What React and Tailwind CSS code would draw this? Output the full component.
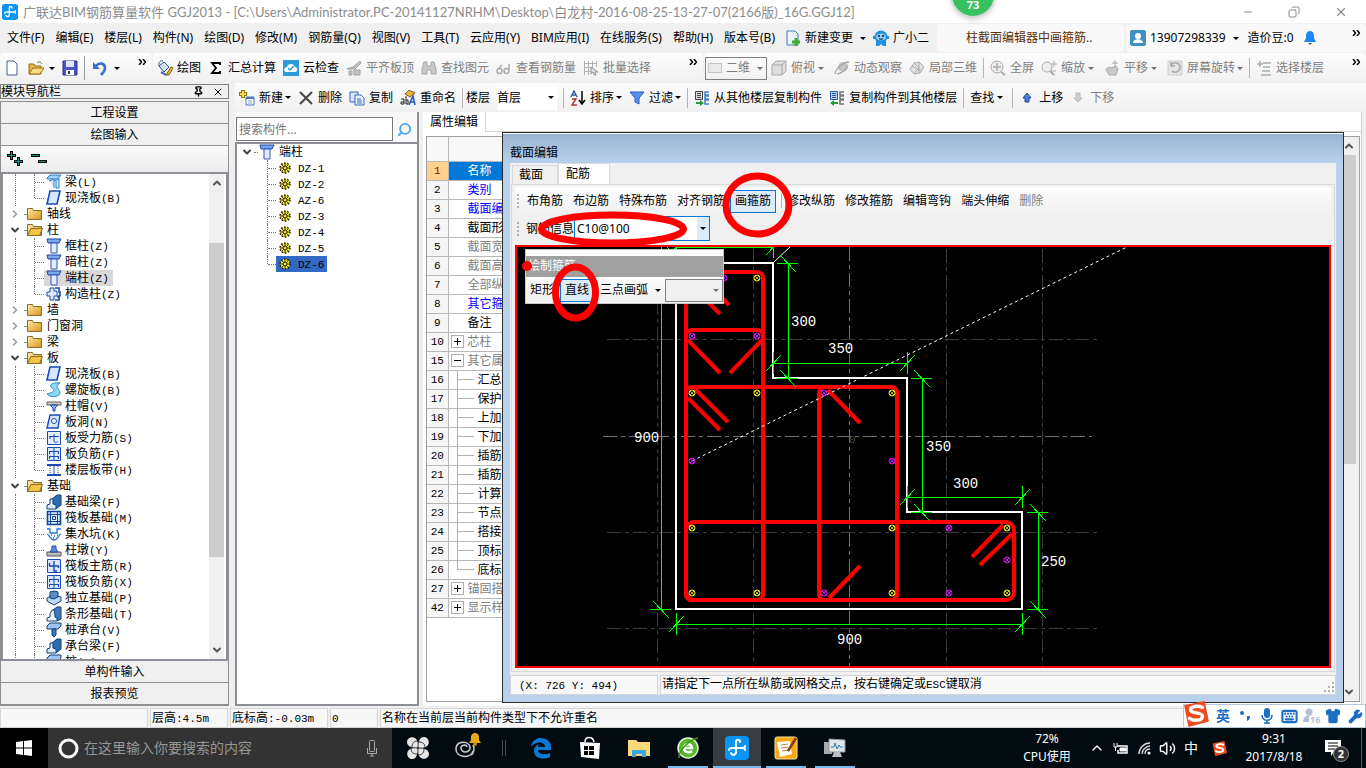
import React, { useState } from 'react';
import { Keyboard, Shirt, Wrench, Volume2, ChevronUp, ChevronDown, ChevronRight, Search, Minus, X, Copy, Pin } from 'lucide-react';

const menus = ['文件(F)', '编辑(E)', '楼层(L)', '构件(N)', '绘图(D)', '修改(M)', '钢筋量(Q)', '视图(V)', '工具(T)', '云应用(Y)', 'BIM应用(I)', '在线服务(S)', '帮助(H)', '版本号(B)'];

const navTree = [
    { icon: 'beam', text: '梁', key: '(L)' },
    { icon: 'slab', text: '现浇板', key: '(B)', last: true },
    { folder: 'closed', text: '轴线' },
    { folder: 'open', text: '柱' },
    { icon: 'column', text: '框柱', key: '(Z)' },
    { icon: 'column', text: '暗柱', key: '(Z)' },
    { icon: 'column', text: '端柱', key: '(Z)', selected: true },
    { icon: 'struct', text: '构造柱', key: '(Z)', last: true },
    { folder: 'closed', text: '墙' },
    { folder: 'closed', text: '门窗洞' },
    { folder: 'closed', text: '梁' },
    { folder: 'open', text: '板' },
    { icon: 'slab', text: '现浇板', key: '(B)' },
    { icon: 'spiral', text: '螺旋板', key: '(B)' },
    { icon: 'cap', text: '柱帽', key: '(V)' },
    { icon: 'hole', text: '板洞', key: '(N)' },
    { icon: 'gridA', text: '板受力筋', key: '(S)' },
    { icon: 'gridB', text: '板负筋', key: '(F)' },
    { icon: 'band', text: '楼层板带', key: '(H)', last: true },
    { folder: 'open', text: '基础' },
    { icon: 'fbeam', text: '基础梁', key: '(F)' },
    { icon: 'raft', text: '筏板基础', key: '(M)' },
    { icon: 'pit', text: '集水坑', key: '(K)' },
    { icon: 'pier', text: '柱墩', key: '(Y)' },
    { icon: 'gridC', text: '筏板主筋', key: '(R)' },
    { icon: 'gridB', text: '筏板负筋', key: '(X)' },
    { icon: 'pad', text: '独立基础', key: '(P)' },
    { icon: 'strip', text: '条形基础', key: '(T)' },
    { icon: 'pile', text: '桩承台', key: '(V)' },
    { icon: 'fbeam', text: '承台梁', key: '(F)' },
    { icon: 'pile', text: '桩', key: '(U)' },
];

const members = ['DZ-1', 'DZ-2', 'AZ-6', 'DZ-3', 'DZ-4', 'DZ-5', 'DZ-6'];

const propRows = [
    { no: 1, name: '名称', active: true },
    { no: 2, name: '类别', color: 'text-[#0000ff]' },
    { no: 3, name: '截面编辑', color: 'text-[#0000ff]' },
    { no: 4, name: '截面形状' },
    { no: 5, name: '截面宽', color: 'text-[#808080]' },
    { no: 6, name: '截面高', color: 'text-[#808080]' },
    { no: 7, name: '全部纵筋', color: 'text-[#808080]' },
    { no: 8, name: '其它箍筋', color: 'text-[#0000ff]' },
    { no: 9, name: '备注' },
    { no: 10, name: '芯柱', color: 'text-[#808080]', box: '+' },
    { no: 15, name: '其它属性', color: 'text-[#808080]', box: '-' },
    { no: 16, name: '汇总信息', child: true },
    { no: 17, name: '保护层厚', child: true },
    { no: 18, name: '上加密范', child: true },
    { no: 19, name: '下加密范', child: true },
    { no: 20, name: '插筋构造', child: true },
    { no: 21, name: '插筋信息', child: true },
    { no: 22, name: '计算设置', child: true },
    { no: 23, name: '节点设置', child: true },
    { no: 24, name: '搭接设置', child: true },
    { no: 25, name: '顶标高', child: true },
    { no: 26, name: '底标高', child: true, last: true },
    { no: 27, name: '锚固搭接', color: 'text-[#808080]', box: '+' },
    { no: 42, name: '显示样式', color: 'text-[#808080]', box: '+' },
];

// ---------- icons ----------

const treeShapes = {
    column: <><path d="M1 1h14l-2 4H2z" fill="#7ea6ec" stroke="#1d4aa8" /><path d="M5 5h6v10H5z" fill="#e4edff" stroke="#2a55c0" /></>,
    beam: <><path d="M1 4l3-3h11l-3 4H1z" fill="#9cd2f5" stroke="#2a7fc4" /><path d="M3 7l5-2v9M8 7l5-2v9h-3V7" fill="#cfeafd" stroke="#2a7fc4" /></>,
    slab: <path d="M4 1h10l-3 13H1z" fill="#d7e6ff" stroke="#1b49b8" strokeWidth="1.6" />,
    struct: <><path d="M4 2h4v3h3v5H8v4H4v-4H1V6h3z" fill="#dce8ff" stroke="#1b49a0" /><path d="M9 2h4v3M12 6h2v4h-2M11 11h2v3H9" fill="none" stroke="#1b49a0" strokeWidth="1.6" /></>,
    spiral: <path d="M14 1C7 0 2 3 6 6c3 2 3 4-5 6 3 4 13 3 13-1S7 5 14 1z" fill="#8fd6f8" stroke="#2688c8" />,
    cap: <><path d="M1 4h14v3H1z" fill="#c8c8c8" stroke="#666" /><path d="M4 7h8l-3 3v3H7v-3z" fill="#8fb2f0" stroke="#1b49a0" /></>,
    hole: <><path d="M4 1h10l-2 13H1z" fill="#d7e6ff" stroke="#1b49b8" strokeWidth="1.4" /><circle cx="8" cy="7" r="2.5" fill="#fff" stroke="#1b49b8" /></>,
    gridA: <><path d="M1.500 1.500h13v13h-13z" fill="#e6efff" stroke="#1b49b8" /><path d="M3 6.500h10M8 4v7c0 2 3 2 4 0M4 6v3" fill="none" stroke="#1b49b8" /></>,
    gridB: <><path d="M1.500 1.500h13v13h-13z" fill="#dbe7ff" stroke="#1b49b8" /><path d="M8 1v13M3 5.500h10M3 10.500h10M3.500 5v3M12.500 5v3M3.500 10v3M12.500 10v3" fill="none" stroke="#1b49b8" /></>,
    gridC: <><path d="M1.500 1.500h13v13h-13z" fill="#dbe7ff" stroke="#1b49b8" /><path d="M3 8h10M8 3v10h3M3.500 5v3M12.500 8v2" fill="none" stroke="#1b49b8" strokeWidth="1.400" /></>,
    band: <><path d="M1 3h14M1 13h14" stroke="#1b49b8" strokeWidth="2" /><path d="M4 4v8M12 4v8" stroke="#444" strokeDasharray="1 1" /><path d="M8 3v10" stroke="#1b49b8" /></>,
    fbeam: <><path d="M6 5l5-4h4v10l-5 4z" fill="#2f6cb0" stroke="#123f7c" /><path d="M1 15v-4l3-1V5h3v5l3 1v4z" fill="#dcecff" stroke="#123f7c" /></>,
    raft: <><path d="M1.500 1.500h13v13h-13z" fill="#dbe9ff" stroke="#0f4393" strokeWidth="1.600" /><path d="M4.500 1v13M11.500 1v13M1 4.500h13M1 11.500h13M6.500 6.500h3v3h-3z" fill="none" stroke="#0f4393" /></>,
    pit: <path d="M1 3h3v4h7V3h4M1 8c3 1 3 6 7 6s4-5 7-6M5 9h1M8 10h1M11 9h1M7 12h1" fill="none" stroke="#2a6fd0" strokeWidth="1.3" />,
    pier: <><path d="M1 10h14v4H1z" fill="#bbb" stroke="#555" /><path d="M4 10l2-3V4h4v3l2 3z" fill="#5c8fe8" stroke="#1b49a0" /></>,
    pad: <><path d="M1 8l6-3 8 2v4l-7 4-7-4z" fill="#bcd8f8" stroke="#123f7c" /><path d="M4 8V2l4-1 4 1v5L8 9z" fill="#5a8cc8" stroke="#123f7c" /></>,
    strip: <><path d="M7 4l4-3h4v12l-4 2z" fill="#3d78b8" stroke="#123f7c" /><path d="M1 15v-3l3-1V8l2-4h2l1 4v3l2 1v3z" fill="#eaf3ff" stroke="#123f7c" /></>,
    pile: <><path d="M1 4l3-3h11v3l-3 3H1z" fill="#9cc3f2" stroke="#123f7c" /><path d="M6 7h4v6l-2 2-2-2z" fill="#3d78b8" stroke="#123f7c" /></>,
};

function TreeIcon({ name }) {
    return <svg className="h-4 w-4 shrink-0" viewBox="0 0 16 16">{treeShapes[name]}</svg>;
}

function Folder({ open }) {
    return (
        <svg className="h-4 w-4 shrink-0" viewBox="0 0 16 16">
            <defs>
                <linearGradient id="fold" x1="0" y1="0" x2="1" y2="1">
                    <stop offset="0" stopColor="#fff0b0" />
                    <stop offset="1" stopColor="#d89010" />
                </linearGradient>
            </defs>
            <path d="M.5 13.500v-11h5l1 2h8v9z" fill="url(#fold)" stroke="#8a6a2a" />
            {open && <path d="M.5 13.500l3.500-7h11.500l-3 7z" fill="#f5c440" stroke="#8a6a2a" />}
        </svg>
    );
}

function Gear() {
    return (
        <svg className="h-3 w-3 shrink-0" viewBox="0 0 12 12">
            <circle cx="6" cy="6" r="5" fill="#f2ea2a" stroke="#111" strokeWidth="1.400" strokeDasharray="1.600 1.540" />
            <path d="M6 1v3M6 8v3M1 6h3M8 6h3M2.500 2.500l2 2M7.500 7.500l2 2M9.500 2.500l-2 2M4.500 7.500l-2 2" stroke="#222" strokeWidth=".8" />
            <circle cx="6" cy="6" r="2" fill="#f2ea2a" stroke="#111" />
        </svg>
    );
}

const toolShapes = {
    newFile: <path d="M3 1h7l3 3v11H3z" fill="#fff" stroke="#47618f" />,
    open: <><path d="M1 14V4h5l1 2h6v8z" fill="#e8b348" stroke="#9a6d1c" /><path d="M1 14l4-6h11l-4 6z" fill="#fadb87" stroke="#9a6d1c" /><path d="M9 3c2-2 4-1 5 1" fill="none" stroke="#3d7a36" /></>,
    save: <><path d="M1 1h14v14H1z" fill="#4a55c0" stroke="#29307c" /><path d="M4 1h8v6H4z" fill="#dfe7ff" /><path d="M4 10h8v5H4z" fill="#fff" /><path d="M6 11h2v3H6z" fill="#29307c" /></>,
    undo: <><path d="M2 2v7h7z" fill="#3a6fd0" /><path d="M5 6c3-4 9-3 9 2 0 3-2 5-4 7" fill="none" stroke="#3a6fd0" strokeWidth="2.600" /></>,
    draw: <><path d="M2 6l5-4 5 5-5 5z" fill="#d5e4fb" stroke="#334f85" /><path d="M2 6c-1-4 2-6 4-5" fill="none" stroke="#334f85" /><path d="M9 15l5-8 2 1-4 7z" fill="#efb92e" stroke="#7c5a10" /><path d="M4 12l5 3" stroke="#2c57b0" strokeWidth="2" /></>,
    sigma: <path d="M12 5V3H4l4 5-4 5h8v-2" fill="none" stroke="#000" strokeWidth="1.800" />,
    cloud: <><path d="M0 0h16v16H0z" fill="#2d9ade" /><path d="M3 12c-3-1-2-5 1-5 1-4 7-4 8 0 3 0 3 5 0 5z" fill="#fff" /><path d="M5 8l2 2 4-4" fill="none" stroke="#2d9ade" strokeWidth="1.300" /></>,
    align: <path d="M1 9l6-2 7-6 1 2-6 6H2zM3 11h3v4H3zM8 10h6v5H8z" fill="#c2c2c2" stroke="#a0a0a0" />,
    binoc: <path d="M3 2h3v4h4V2h3l2 7v5h-5v-4H6v4H1V9z" fill="#c9c9c9" stroke="#a5a5a5" />,
    glasses: <path d="M1 11a2.500 2.500 0 1 0 5 0 2.500 2.500 0 1 0-5 0M8 11a2.500 2.500 0 1 0 5 0 2.500 2.500 0 1 0-5 0M2 9l4-4M13 10V4" fill="none" stroke="#a8a8a8" strokeWidth="1.400" />,
    batch: <><path d="M1.500 1v14M5.500 1v14M1 3.500h13M1 7.500h9M1 11.500h7M9.500 1v7M13.500 1v6" fill="none" stroke="#b0b0b0" /><path d="M8 7l7 5-3 0 1 3-2 0-1-3-2 2z" fill="#ddd" stroke="#999" /></>,
    cube: <path d="M1 5l4-4h10v10l-4 4H1zM1 5h10v10M11 5l4-4" fill="#dedede" stroke="#aaa" />,
    orbit: <><circle cx="9" cy="7" r="5" fill="#c4c4c4" /><path d="M1 14C2 8 9 2 15 2M3 14c5-1 9-4 11-9" fill="none" stroke="#aaa" strokeWidth="1.300" /></>,
    part3d: <path d="M1 9l4-6 5-1 5 5-4 6-6 1zM5 3l5 5-5 6M10 2v11M3 6l9 5" fill="#e3e3e3" stroke="#aaa" />,
    full: <><circle cx="7" cy="7" r="6" fill="#eee" stroke="#aaa" /><path d="M7 3v8M3 7h8" stroke="#aaa" strokeWidth="1.500" /><path d="M11 12l4 3" stroke="#aaa" strokeWidth="2" /></>,
    zoom: <><circle cx="6" cy="7" r="5" fill="#eee" stroke="#aaa" /><path d="M13 1v6M10 4h6M10 11h5" stroke="#aaa" /><path d="M9 11l4 4" stroke="#aaa" strokeWidth="2" /></>,
    pan: <><path d="M2 9l3-2 2 1 5-2 2 3-2 6H5z" fill="#c8c8c8" stroke="#aaa" /><path d="M11 0v6M8 3h6" stroke="#aaa" /></>,
    rotate: <><path d="M1 1h14v14H1z" fill="#e4e4e4" stroke="#ccc" /><path d="M4 5c3-4 9-2 9 2s-4 7-8 4M4 2v4h4" fill="none" stroke="#aaa" strokeWidth="1.600" /></>,
    floors: <path d="M1 4h6M7 3h8M7 7h7M6 11h8M5 15h10M4 1v6" fill="none" stroke="#aaa" strokeWidth="1.500" />,
    create: <><path d="M4 0v8M0 4h8" stroke="#9a7a10" strokeWidth="4" /><path d="M4 1v6M1 4h6" stroke="#f4d94a" strokeWidth="2" /><path d="M7 7h8v8H7z" fill="#fff" stroke="#4f78bb" /><path d="M7 8h8" stroke="#4f78bb" strokeWidth="2" /><path d="M9 11h4M9 13h4" stroke="#7fa2d8" /></>,
    del: <path d="M2 2l12 12M14 2L2 14" stroke="#444" strokeWidth="2" />,
    copy: <><path d="M1 2h8v10H1z" fill="#d5e4fb" stroke="#3d68b8" /><path d="M6 5h6l3 3v7H6z" fill="#eaf2ff" stroke="#3d68b8" /><path d="M8 9h4M8 11h5M8 13h5" stroke="#3d68b8" /></>,
    rename: <><path d="M5 4l4-4 6 3-5 4z" fill="#e8b33e" stroke="#875f14" /><path d="M9 15l4-9 2 9M10 12h4" fill="none" stroke="#2458c0" strokeWidth="1.600" /><path d="M1 9h3v5H1v-2h3M6 6v8h2v-4H6" fill="none" stroke="#222" /></>,
    sort: <><path d="M1 7l3-6 3 6M2 5h4" fill="none" stroke="#3355a8" strokeWidth="1.400" /><path d="M2 9h4l-4 6h5" fill="none" stroke="#a33a3a" strokeWidth="1.400" /><path d="M12 1v12M9 10l3 4 3-4" fill="none" stroke="#000" strokeWidth="1.500" /></>,
    filter: <path d="M1 2h14l-5 6v6l-4-2V8z" fill="#5590ef" stroke="#2a5bbb" />,
    copyFrom: <><path d="M1.500 1.500h7v8h-7z" fill="#ddd" stroke="#444" /><path d="M3 3.500h4M3 5.500h4M3 7.500h4" stroke="#444" /><path d="M15 2h-4v3h4M15 6h-4v3h4M15 10h-4v4h4" fill="none" stroke="#4a80cc" strokeWidth="1.600" /><path d="M2 12h4v-2l4 3-4 3v-2H2z" fill="#29993d" /></>,
    copyTo: <><path d="M1.500 1.500h7v8h-7z" fill="#b9d2fb" stroke="#2a56a8" /><path d="M3 3.500h4M3 5.500h4M3 7.500h4" stroke="#2a56a8" /><path d="M15 2h-4v3h4M15 6h-4v3h4M15 10h-4v4h4" fill="none" stroke="#777" strokeWidth="1.600" /><path d="M9 12H5v-2l-4 3 4 3v-2h4z" fill="#29993d" /></>,
    up: <path d="M8 3l4 5h-2v4H6V8H4z" fill="#4a7fe0" stroke="#1f4597" />,
    down: <path d="M8 12L4 8h2V3h4v5h2z" fill="#ccc" stroke="#bbb" />,
};

function ToolIcon({ name }) {
    return <svg className="h-4 w-4 shrink-0" viewBox="0 0 16 16">{toolShapes[name]}</svg>;
}

function Caret({ dim, tight }) {
    return (
        <span className={tight ? 'flex w-2 shrink-0 justify-end' : 'flex w-3 shrink-0 justify-center'}>
            <svg className={dim ? 'h-[3px] w-[6px] text-[#707070]' : 'h-[3px] w-[6px] text-black'} viewBox="0 0 6 3">
                <path d="M0 0h6L3 3z" fill="currentColor" />
            </svg>
        </span>
    );
}

function Tool({ icon, label, caret, dim, tight }) {
    return (
        <button className={dim ? 'flex shrink-0 items-center whitespace-nowrap text-[#808080]' : 'flex shrink-0 items-center whitespace-nowrap text-black'}>
            {icon && <ToolIcon name={icon} />}
            {label && <span className={icon ? 'ml-1' : ''}>{label}</span>}
            {caret && <Caret dim={dim} tight={tight} />}
        </button>
    );
}

function Sep() {
    return <span className="-mx-px h-5 w-px shrink-0 bg-[#b4b4b4]" />;
}

function More() {
    return (
        <button className="ml-auto flex h-5 w-[14px] shrink-0 items-start self-start" aria-label="更多">
            <svg className="h-[6px] w-2" viewBox="0 0 8 6"><path d="M1 0l2.500 3L1 6M5 0l2.500 3L5 6" fill="none" stroke="#000" strokeWidth="1.500" /></svg>
        </button>
    );
}

function AppLogo({ className }) {
    return (
        <svg className={className} viewBox="0 0 24 24">
            <rect width="24" height="24" rx="4" fill="#0a94f5" />
            <path d="M15 6c0-3-4-3-4 0v10c0 3-4 4-5 1M4 14c0-2 2-2 4-2h8c3 0 4 0 4 2M20 10c0 2-1 2-4 2" fill="none" stroke="#fff" strokeWidth="2" strokeLinecap="round" />
        </svg>
    );
}

function Sogou({ className }) {
    return (
        <svg className={className} viewBox="0 0 24 24">
            <path d="M1 4l19-4 4 19-19 5z" fill="#ee4b1e" />
            <path d="M18 6c-4-2-11-1-11 2 0 4 11 2 11 6 0 4-8 5-12 2" fill="none" stroke="#fff" strokeWidth="3.200" strokeLinecap="round" />
        </svg>
    );
}

// ---------- top bars ----------

function TitleBar() {
    return (
        <header className="flex h-[23px] shrink-0 items-center bg-white pl-[2px] text-[#8c8c8c]">
            <AppLogo className="h-4 w-4" />
            <h1 className="ml-[5px] whitespace-nowrap font-['Lato','Noto_Sans_CJK_SC',sans-serif] text-[13px] leading-5">广联达BIM钢筋算量软件 GGJ2013 - [C:\Users\Administrator.PC-20141127NRHM\Desktop\白龙村-2016-08-25-13-27-07(2166版)_16G.GGJ12]</h1>
            <div className="ml-auto flex items-center gap-[34px] pr-[18px]">
                <button aria-label="最小化"><Minus size={12} strokeWidth={2} /></button>
                <button aria-label="还原"><Copy size={12} strokeWidth={2} className="-scale-x-100" /></button>
                <button aria-label="关闭"><X size={14} strokeWidth={2} /></button>
            </div>
        </header>
    );
}

function MenuBar() {
    return (
        <div className="flex h-[30px] shrink-0 items-center pl-[7px]">
            <nav className="flex items-center gap-[11px]">
                {menus.map((m) => <button key={m} className="whitespace-nowrap">{m}</button>)}
            </nav>
            <button className="ml-[10px] flex items-center whitespace-nowrap">
                <svg className="mr-1 h-4 w-4" viewBox="0 0 16 16">
                    <path d="M2 1h8l3 3v11H2z" fill="#eaf5ff" stroke="#3280b8" />
                    <path d="M11 8v8M7 12h8" stroke="#3fae2a" strokeWidth="3" />
                </svg>
                新建变更
                <span className="ml-1"><Caret /></span>
            </button>
            <button className="ml-1 flex items-center whitespace-nowrap">
                <svg className="mr-1 h-4 w-4" viewBox="0 0 16 16">
                    <circle cx="8" cy="7" r="6.500" fill="#1f8fe0" />
                    <path d="M3 11h10v5h-3l-2-2-2 2H3zM0 6h3v3H0zM13 6h3v3h-3z" fill="#1f8fe0" />
                    <ellipse cx="8" cy="7" rx="5" ry="3.500" fill="#8fd0f8" />
                    <circle cx="6" cy="6" r="1" fill="#114" /><circle cx="10" cy="6" r="1" fill="#114" />
                    <path d="M6 8.500c1 1 3 1 4 0" fill="none" stroke="#114" />
                </svg>
                广小二
            </button>
            <div className="ml-auto flex h-7 w-[187px] shrink-0 items-center rounded bg-[#f9f9f9] pl-[29px] text-[#5c2e00]">柱截面编辑器中画箍筋..</div>
            <div className="ml-[2px] flex h-7 w-[240px] shrink-0 items-center rounded bg-[#f9f9f9] pl-1">
                <svg className="mr-1 h-4 w-4" viewBox="0 0 16 16">
                    <rect width="16" height="16" rx="2" fill="#3f8fc6" />
                    <circle cx="8" cy="6" r="3" fill="#fff" /><path d="M3 13c0-5 10-5 10 0z" fill="#fff" />
                </svg>
                13907298339
                <span className="ml-1"><Caret /></span>
                <span className="ml-[6px]">造价豆:0</span>
                <svg className="ml-2 h-4 w-4" viewBox="0 0 16 16">
                    <path d="M8 1c4 0 4 4 4 7l2 4H2l2-4c0-3 0-7 4-7z" fill="#1f86f4" /><path d="M6 13h4l-2 2z" fill="#1f5fb0" />
                </svg>
                <div className="ml-auto flex h-full pt-[6px]"><More /></div>
            </div>
        </div>
    );
}

function MainToolbar() {
    return (
        <div className="flex h-[30px] shrink-0 gap-px">
            <div className="flex w-[152px] shrink-0 items-center rounded bg-linear-to-b from-[#fdfdfd] to-[#f0f0f0] pl-1">
                <Tool icon="newFile" />
                <span className="ml-2 flex items-center"><Tool icon="open" /><span className="ml-[2px]"><Caret /></span></span>
                <span className="ml-1"><Tool icon="save" /></span>
                <span className="mx-[6px] h-6 w-px bg-[#999]" />
                <Tool icon="undo" />
                <span className="ml-1"><Caret /></span>
                <div className="ml-auto flex h-full pt-[6px]"><More /></div>
            </div>
            <div className="flex w-[550px] shrink-0 items-center gap-[7px] rounded bg-linear-to-b from-[#fdfdfd] to-[#f0f0f0] pl-1">
                <Tool icon="draw" label="绘图" />
                <Tool icon="sigma" label="汇总计算" />
                <Tool icon="cloud" label="云检查" />
                <Tool icon="align" label="平齐板顶" dim />
                <Tool icon="binoc" label="查找图元" dim />
                <Tool icon="glasses" label="查看钢筋量" dim />
                <Tool icon="batch" label="批量选择" dim />
                <div className="ml-auto flex h-full pt-[6px]"><More /></div>
            </div>
            <div className="flex min-w-0 flex-1 items-center gap-[7px] overflow-hidden rounded bg-linear-to-b from-[#fdfdfd] to-[#f0f0f0] pl-px">
                <button className="-mr-[3px] flex h-[23px] w-[62px] shrink-0 items-center border border-[#808080] pl-[2px] whitespace-nowrap text-[#808080]">
                    <span className="mr-1 h-[10px] w-[14px] shrink-0 border border-[#c4c4c4] bg-[#e9e9e9]" />二维
                    <span className="ml-1"><Caret dim /></span>
                </button>
                <Tool icon="cube" label="俯视" caret dim />
                <Tool icon="orbit" label="动态观察" dim />
                <Tool icon="part3d" label="局部三维" dim />
                <Sep />
                <Tool icon="full" label="全屏" dim />
                <Tool icon="zoom" label="缩放" caret dim />
                <Tool icon="pan" label="平移" caret dim />
                <Tool icon="rotate" label="屏幕旋转" caret tight dim />
                <Sep />
                <Tool icon="floors" label="选择楼层" dim />
                <div className="ml-auto flex h-full pt-[6px]"><More /></div>
            </div>
        </div>
    );
}

function MemberToolbar() {
    return (
        <div className="flex h-[29px] shrink-0 items-center gap-[7px] bg-linear-to-b from-[#fcfcfc] to-[#f0f0f0] pl-1">
            <Tool icon="create" label="新建" caret tight />
            <Tool icon="del" label="删除" />
            <Tool icon="copy" label="复制" />
            <Tool icon="rename" label="重命名" />
            <Sep />
            <label htmlFor="floor" className="-ml-[3px] shrink-0">楼层</label>
            <div className="relative flex h-6 w-[60px] shrink-0 items-center bg-white">
                <select id="floor" className="h-6 w-full appearance-none bg-transparent outline-none">
                    <option>首层</option>
                </select>
                <span className="pointer-events-none absolute right-0"><Caret /></span>
            </div>
            <Sep />
            <Tool icon="sort" label="排序" caret tight />
            <Tool icon="filter" label="过滤" caret tight />
            <Sep />
            <Tool icon="copyFrom" label="从其他楼层复制构件" />
            <Tool icon="copyTo" label="复制构件到其他楼层" />
            <Sep />
            <Tool label="查找" caret />
            <Sep />
            <Tool icon="up" label="上移" />
            <Tool icon="down" label="下移" dim />
        </div>
    );
}

// ---------- left navigation ----------

// latin part of the labels is set in half-width letters
function Mono({ children }) {
    return <span className="font-['Liberation_Mono',monospace] text-[11px]">{children}</span>;
}

function NavRow({ row }) {
    if (row.folder) {
        const open = row.folder === 'open';
        return (
            <li className="flex h-4 items-center whitespace-nowrap pl-[6px]">
                <span className="flex w-[15px] shrink-0">
                    {open ? <ChevronDown size={12} strokeWidth={4} className="text-[#444]" /> : <ChevronRight size={12} strokeWidth={3} className="text-[#999]" />}
                </span>
                <span className="mr-px w-[2px] border-b border-dotted border-[#888]" />
                <Folder open={open} />
                <span className="ml-1">{row.text}</span>
            </li>
        );
    }
    return (
        <li className="flex h-4 items-center whitespace-nowrap pl-3">
            <span className="h-4 w-[19px] shrink-0 border-l border-dotted border-[#777]" />
            <span className="h-4 w-px shrink-0">
                <span className={row.last ? 'block h-2 border-l border-dotted border-[#777]' : 'block h-4 border-l border-dotted border-[#777]'} />
            </span>
            <span className="w-[9px] shrink-0 border-b border-dotted border-[#777]" />
            <span className={row.selected ? 'flex h-4 items-center bg-[#d9d9d9] px-[2px] pr-1' : 'flex h-4 items-center px-[2px] pr-1'}>
                <TreeIcon name={row.icon} />
                <span className="ml-[3px]">{row.text}<Mono>{row.key}</Mono></span>
            </span>
        </li>
    );
}

function NavButton({ children }) {
    return <button className="h-[22px] shrink-0 border-b border-[#8f8f8f] bg-[#f0f0f0]">{children}</button>;
}

function NavPanel() {
    return (
        <aside className="flex w-[229px] shrink-0 flex-col">
            <div className="mt-px flex h-[15px] shrink-0 items-center border border-[#808080] pr-1 leading-3">
                模块导航栏
                <button className="ml-auto" aria-label="固定"><Pin size={11} strokeWidth={3} /></button>
                <button className="ml-2" aria-label="关闭"><X size={12} strokeWidth={2} /></button>
            </div>
            <div className="mt-[2px] flex min-h-0 flex-1 flex-col border border-[#8f8f8f]">
                <NavButton>工程设置</NavButton>
                <NavButton>绘图输入</NavButton>
                <div className="flex h-[26px] shrink-0 items-center gap-2 bg-linear-to-b from-[#fbfbfb] to-[#ececec] pl-[6px]">
                    <button aria-label="全部展开">
                        <svg className="h-4 w-4" viewBox="0 0 16 16"><path d="M4.500 0v9M0 4.500h9M11.500 6v9M7 10.500h9" stroke="#000" strokeWidth="3" /><path d="M4.500 1v7M1 4.500h7M11.500 7v7M8 10.500h7" stroke="#129a86" strokeWidth="1" /></svg>
                    </button>
                    <button aria-label="全部折叠">
                        <svg className="h-4 w-4" viewBox="0 0 16 16"><path d="M0 4.500h9M7 10.500h9" stroke="#000" strokeWidth="3" /><path d="M1 4.500h7M8 10.500h7" stroke="#129a86" strokeWidth="1" /></svg>
                    </button>
                </div>
                <div className="flex min-h-0 flex-1 border-2 border-[#8c9199] bg-white">
                    <ul className="min-h-0 flex-1 overflow-hidden">
                        {navTree.map((row, i) => <NavRow key={i} row={row} />)}
                    </ul>
                    <div className="mr-[2px] flex w-[15px] shrink-0 flex-col items-center bg-[#f0f0f0] text-[#555]">
                        <ChevronUp size={12} strokeWidth={4} className="my-[3px]" />
                        <span className="mt-[51px] h-[314px] w-full bg-[#cdcdcd]" />
                        <ChevronDown size={12} strokeWidth={4} className="mt-auto mb-[3px]" />
                    </div>
                </div>
                <NavButton>单构件输入</NavButton>
                <NavButton>报表预览</NavButton>
            </div>
        </aside>
    );
}

// ---------- member list ----------

function MemberPanel() {
    return (
        <section className="flex w-[184px] shrink-0 flex-col border-r-2 border-[#8c8f96]">
            <div className="flex h-[30px] shrink-0 items-end bg-[#f8f8f8] pb-px pl-px">
                <input aria-label="搜索构件" placeholder="搜索构件..." className="h-6 w-[157px] border border-[#7a7a7a] bg-white px-[2px] outline-none placeholder:text-[#767676]" />
                <button className="mb-1 ml-1 text-[#4aa4e8]" aria-label="搜索"><Search size={15} strokeWidth={3} className="-scale-x-100" /></button>
            </div>
            <div className="min-h-0 flex-1 border-2 border-r-0 border-[#8c8f96] bg-white">
                <div className="flex h-4 items-center pl-1">
                    <ChevronDown size={12} strokeWidth={4} className="text-[#444]" />
                    <span className="mx-px w-1 border-b border-dotted border-[#777]" />
                    <TreeIcon name="column" />
                    <span className="ml-1">端柱</span>
                </div>
                <ul className="pl-[30px]">
                    {members.map((m, i) => (
                        <li key={m} className="flex h-4 items-center">
                            <span className={i === members.length - 1 ? 'mb-2 h-2 border-l border-dotted border-[#777]' : 'h-4 border-l border-dotted border-[#777]'} />
                            <span className="w-2 border-b border-dotted border-[#777]" />
                            <span className={i === members.length - 1 ? 'flex h-4 items-center bg-[#316ac5] px-[3px]' : 'flex h-4 items-center px-[3px]'}>
                                <Gear />
                                <span className="ml-[7px]"><Mono>{m}</Mono></span>
                            </span>
                        </li>
                    ))}
                </ul>
            </div>
        </section>
    );
}

// ---------- property grid ----------

function PropertyPanel() {
    return (
        <section className="ml-1 flex min-w-0 flex-1 flex-col border-r border-[#d0d0d0] bg-white">
            <div className="flex h-5 shrink-0 border-b border-[#d5d5d5]">
                <button className="h-5 w-[63px] border-r border-[#d5d5d5] bg-white text-center">属性编辑</button>
            </div>
            <div className="mt-1 mr-px mb-1 ml-[3px] flex min-h-0 flex-1 border border-[#a0a0a0]">
                <div className="min-w-0 flex-1">
                    <table className="w-full border-collapse">
                        <thead>
                            <tr className="h-[24px] bg-[#f8f8f8]">
                                <th className="w-[21px] border-r border-b border-[#b8b8b8]" aria-label="序号" />
                                <th className="border-b border-[#b8b8b8]" aria-label="属性名称" />
                            </tr>
                        </thead>
                        <tbody>
                            {propRows.map((row) => (
                                <tr key={row.no} className="h-[19px]">
                                    <td className={row.active ? 'border-r border-b border-[#b8b8b8] bg-[#fdd28c] p-0 text-center leading-4 text-[#8a1010]' : 'border-r border-b border-[#b8b8b8] bg-[#f6f6f6] p-0 text-center leading-4'}><Mono>{row.no}</Mono></td>
                                    <td className={row.active ? 'border-b border-[#b8b8b8] bg-[#0078d7] p-0 text-white' : 'border-b border-[#b8b8b8] p-0'}>
                                        <div className="flex h-[18px] items-center whitespace-nowrap">
                                            {row.child ? (
                                                <span className="flex h-[18px] w-[29px] pl-2">
                                                    <span className={row.last ? 'h-[9px] border-l border-[#b0b0b0]' : 'h-[19px] border-l border-[#b0b0b0]'} />
                                                    <span className="h-[9px] w-4 border-b border-[#b0b0b0]" />
                                                </span>
                                            ) : (
                                                <span className="flex w-[19px] pl-[2px]">
                                                    {row.box && (
                                                        <button aria-label={row.name} className="flex h-[13px] w-[13px] items-center justify-center border border-[#b0b0b0]">
                                                            <svg className="h-[7px] w-[7px]" viewBox="0 0 7 7"><path d={row.box === '+' ? 'M0 3.500h7M3.500 0v7' : 'M0 3.500h7'} stroke="#000" /></svg>
                                                        </button>
                                                    )}
                                                </span>
                                            )}
                                            <span className={row.color}>{row.name}</span>
                                        </div>
                                    </td>
                                </tr>
                            ))}
                        </tbody>
                    </table>
                </div>
                <div className="flex w-[17px] shrink-0 flex-col items-center bg-[#f0f0f0] pr-[3px] text-[#555]">
                    <ChevronUp size={12} strokeWidth={4} className="my-[3px]" />
                    <span className="h-[309px] w-full bg-[#cdcdcd]" />
                    <ChevronDown size={12} strokeWidth={4} className="mt-auto mb-[3px]" />
                </div>
            </div>
        </section>
    );
}

// ---------- section drawing ----------

const yellowBars = [[757, 278], [692, 393], [757, 393], [892, 393], [692, 528], [892, 528], [1007, 528], [692, 593], [757, 593], [892, 593], [1007, 593]];
const pinkBars = [[724, 278], [692, 336], [757, 336], [692, 461], [824, 393], [892, 461], [949, 528], [1007, 560], [824, 593], [949, 593]];
const vertDims = [[661, 240, 609], [788, 263, 378], [922, 378, 512], [1038, 512, 609]];
const horzDims = [[247, 676, 773], [363, 773, 907], [497, 907, 1022], [624, 676, 1022]];
const dimTexts = [[634, 442, '900'], [791, 326, '300'], [828, 353, '350'], [926, 451, '350'], [953, 488, '300'], [1041, 566, '250'], [837, 644, '900']];

function SectionDrawing() {
    return (
        <svg className="block h-[420px] w-[813px]" viewBox="517 247 813 420" fill="none">
            <g stroke="#3c3c3c" strokeDasharray="14 4 4 4" shapeRendering="crispEdges">
                {[657, 753, 946, 1042].map((x) => <path key={x} d={`M${x}.5 249V667`} />)}
                {[339, 532, 628].map((y) => <path key={y} d={`M607 ${y}.5H1097`} />)}
            </g>
            <path d="M849.500 247V667M603 436.500H1092" stroke="#707070" strokeDasharray="14 4 4 4" shapeRendering="crispEdges" />
            <path d="M676 609V263h97V378H907V512h115v97z" stroke="#fff" strokeWidth="2" shapeRendering="crispEdges" />
            <path d="M773 263l18-17" stroke="#fff" />
            <g stroke="#f00" strokeWidth="4">
                <rect x="686" y="272" width="77" height="328" rx="6" />
                <rect x="686" y="330" width="77" height="270" rx="6" />
                <rect x="686" y="387" width="211" height="213" rx="6" />
                <rect x="819" y="387" width="78" height="213" rx="6" />
                <rect x="686" y="522" width="328" height="78" rx="8" />
                <path d="M688 282l32 32M697 273l32 32M688 340l32 33M762 340l-32 33M688 398l32 32M695 389l33 33M828 390l32 33M829 598l31-32M1003 525l-31 32M1012 534l-32 31" />
            </g>
            <g stroke="#0f0" shapeRendering="crispEdges">
                {vertDims.map(([x, a, b]) => (
                    <path key={x} d={`M${x}.5 ${a}V${b}M${x - 11} ${a}.5h21M${x - 8} ${a - 8}l16 17M${x - 11} ${b}.5h21M${x - 8} ${b - 8}l16 17`} />
                ))}
                {horzDims.map(([y, a, b]) => (
                    <path key={y} d={`M${a} ${y}.5H${b}M${a}.5 ${y - 11}v22M${a - 7} ${y + 8}l15 -16M${b}.5 ${y - 11}v22M${b - 7} ${y + 8}l15 -16`} />
                ))}
            </g>
            <path d="M692 461L1127 247" stroke="#fff" strokeDasharray="3 3" />
            {yellowBars.map(([x, y]) => (
                <g key={`${x}-${y}`} stroke="#ff0">
                    <circle cx={x} cy={y} r="3" />
                    <path d={`M${x - 2} ${y - 2}l4 4M${x + 2} ${y - 2}l-4 4`} stroke="#b0b030" />
                </g>
            ))}
            {pinkBars.map(([x, y]) => (
                <g key={`${x}-${y}`} stroke="#f0f">
                    <circle cx={x} cy={y} r="3" />
                    <path d={`M${x - 2} ${y - 2}l4 4M${x + 2} ${y - 2}l-4 4`} stroke="#8a30e0" />
                </g>
            ))}
            <g fill="#fff" className="font-['Liberation_Mono',monospace] text-[14px]">
                {dimTexts.map(([x, y, t]) => <text key={`${x}-${y}`} x={x} y={y}>{t}</text>)}
                <text x="849" y="443" fill="#444" className="text-[11px]">0</text>
            </g>
        </svg>
    );
}

function StirrupPalette() {
    return (
        <div className="absolute top-[2px] left-2 w-[199px] border border-[#c8c8c8] bg-[#f0f0f0] shadow-lg">
            <div className="h-[6px] bg-white" />
            <div className="h-[21px] bg-[#a0a0a0] pl-[2px] leading-5 text-white">绘制箍筋</div>
            <div className="flex h-[26px] items-center bg-linear-to-b from-[#fcfcfc] to-[#f0f0f0] pl-1">
                <button>矩形</button>
                <button className="ml-[6px] h-[23px] border border-[#0078d7] bg-[#dcebf8] px-1">直线</button>
                <button className="ml-[6px] flex items-center">三点画弧<span className="ml-1"><Caret /></span></button>
                <div className="relative ml-px flex h-6 flex-1 items-center">
                    <select aria-label="画弧参数" className="h-[23px] w-full appearance-none border border-[#808080] bg-[#f0f0f0]" />
                    <span className="pointer-events-none absolute right-px"><Caret dim /></span>
                </div>
            </div>
        </div>
    );
}

function Grip() {
    return <span className="mr-1 h-[14px] border-l-2 border-dotted border-[#b0b0b0]" />;
}

function SectionDialog() {
    const [info, setInfo] = useState('C10@100');

    return (
        <div role="dialog" aria-label="截面编辑" className="absolute top-[49px] left-[502px] flex h-[571px] w-[842px] flex-col border border-[#2b2b2b] bg-[#b9d1ea] px-[7px] pb-[7px]">
            <div className="-mx-[7px] flex h-[30px] shrink-0 items-center border-t border-white bg-linear-to-b from-[#99b4d1] to-[#b9d1ea] px-[7px] pt-2">截面编辑</div>
            <div className="flex min-h-0 flex-1 flex-col bg-[#f0f0f0]">
                <div role="tablist" className="flex h-[21px] shrink-0 items-end pl-[2px]">
                    <button role="tab" className="h-[19px] w-[46px] border border-b-0 border-[#d9d9d9] pr-2 leading-[18px]">截面</button>
                    <button role="tab" aria-selected="true" className="h-[21px] w-[52px] border border-b-0 border-[#d9d9d9] bg-white pr-3 leading-[18px]">配筋</button>
                </div>
                <div className="mx-px flex min-h-0 flex-1 flex-col border border-[#d9d9d9] bg-[#f0f0f0] px-[3px] pt-[2px]">
                    <div className="flex h-7 shrink-0 items-center gap-[10px] bg-linear-to-b from-[#fdfdfd] to-[#f0f0f0] pl-[2px] whitespace-nowrap">
                        <span className="-mr-[6px] flex"><Grip /></span>
                        <button>布角筋</button>
                        <button>布边筋</button>
                        <button>特殊布筋</button>
                        <button>对齐钢筋</button>
                        <button className="-mx-[5px] h-[23px] border border-[#0078d7] bg-[#dcebf8] px-1">画箍筋</button>
                        <span className="-mr-[5px] h-[14px] w-px bg-[#b4b4b4]" />
                        <button>修改纵筋</button>
                        <button>修改箍筋</button>
                        <button>编辑弯钩</button>
                        <button>端头伸缩</button>
                        <button className="text-[#808080]" disabled>删除</button>
                    </div>
                    <div className="flex h-[30px] shrink-0 items-start pt-px pl-[2px]">
                        <div className="flex items-center">
                            <Grip />
                            <label htmlFor="rebar" className="ml-[3px]">钢筋信息</label>
                            <div className="flex h-[25px] w-[136px] items-center border border-[#0078d7] bg-white">
                                <input id="rebar" value={info} onChange={(e) => setInfo(e.target.value)} className="h-5 min-w-0 flex-1 px-[2px] outline-none" />
                                <button aria-label="展开" className="h-full bg-[#dcebf8]"><Caret /></button>
                            </div>
                        </div>
                    </div>
                    <div className="relative mb-[3px] flex-1 overflow-hidden border-2 border-[#ff0000] bg-black">
                        <SectionDrawing />
                        <StirrupPalette />
                    </div>
                </div>
                <div className="mt-[3px] flex h-5 shrink-0 gap-[2px] leading-[18px]">
                    <div className="w-[148px] border border-[#d5d5d5] bg-[#f8f8f8] pl-2"><Mono>(X: 726 Y: 494)</Mono></div>
                    <div className="flex flex-1 items-end border border-[#d5d5d5] bg-[#f8f8f8] pl-px">
                        <span className="whitespace-nowrap">请指定下一点所在纵筋或网格交点，按右键确定或<Mono>ESC</Mono>键取消</span>
                        <svg className="ml-auto h-3 w-3" viewBox="0 0 12 12" fill="#b5b5b5"><path d="M9 0h2v2H9zM5 4h2v2H5zM9 4h2v2H9zM1 8h2v2H1zM5 8h2v2H5zM9 8h2v2H9z" /></svg>
                    </div>
                </div>
            </div>
        </div>
    );
}

// hand-drawn red marks over the dialog
function Marks() {
    return (
        <svg className="pointer-events-none absolute top-[85px] left-[502px] h-[160px] w-[300px]" viewBox="502 168 300 160" fill="none" stroke="#f00" strokeWidth="7">
            <ellipse cx="757.500" cy="205" rx="31.500" ry="29" />
            <ellipse cx="612.500" cy="229" rx="71" ry="14" />
            <ellipse cx="575.500" cy="292.500" rx="20" ry="25.500" />
            <circle cx="527" cy="266" r="5" fill="#f00" stroke="none" />
        </svg>
    );
}

// ---------- bottom bars ----------

function StatusBar() {
    return (
        <footer className="flex h-[22px] shrink-0 gap-[2px] pt-[2px] leading-[18px] whitespace-nowrap">
            <div className="w-[148px] border border-[#d5d5d5] bg-[#f7f7f7]" />
            <div className="w-[78px] border border-[#d5d5d5] bg-[#f7f7f7] pl-px">层高<Mono>:4.5m</Mono></div>
            <div className="w-[98px] border border-[#d5d5d5] bg-[#f7f7f7] pl-px">底标高<Mono>:-0.03m</Mono></div>
            <div className="w-12 border border-[#d5d5d5] bg-[#f7f7f7] pl-px"><Mono>0</Mono></div>
            <div className="flex-1 border border-[#d5d5d5] bg-[#f7f7f7] pl-px">名称在当前层当前构件类型下不允许重名</div>
        </footer>
    );
}

function ImeBar() {
    return (
        <div className="absolute right-0 bottom-10 flex h-6 items-center border border-[#b5c9dc] bg-white pr-[2px] text-[#1d6fc4]">
            <Sogou className="-mt-1 mr-[5px] -ml-[2px] h-[26px] w-7" />
            <button className="w-4 text-[14px] leading-5 font-bold">英</button>
            <svg className="mx-2 h-3 w-3" viewBox="0 0 12 12"><circle cx="3" cy="3" r="2" fill="currentColor" /><path d="M8 6h3c0 3-1 4-3 5z" fill="currentColor" /></svg>
            <svg className="h-4 w-4" viewBox="0 0 16 16"><rect x="5" y="0" width="6" height="10" rx="3" fill="currentColor" /><path d="M3 7c0 7 10 7 10 0M8 12v4M5 15h6" fill="none" stroke="currentColor" strokeWidth="1.600" /></svg>
            <Keyboard size={17} strokeWidth={3} className="ml-[6px]" />
            <svg className="ml-1 h-4 w-5 text-[#b4bfd4]" viewBox="0 0 20 16" fill="currentColor">
                <circle cx="7" cy="4" r="3.500" /><path d="M1 14c0-8 9-8 10-5v5z" />
                <path d="M7 8h13v8H7z" fill="#fff" />
                <text x="8" y="15" className="text-[9px] font-bold">16</text>
            </svg>
            <Shirt size={16} fill="currentColor" className="ml-[3px]" />
            <Wrench size={15} fill="currentColor" className="ml-[7px]" />
        </div>
    );
}

function Task({ label, active, running, children }) {
    return (
        <button aria-label={label} className={active ? 'relative flex h-10 w-12 items-center justify-center bg-[#363c3f]' : 'relative flex h-10 w-12 items-center justify-center'}>
            {children}
            {running && <span className={active ? 'absolute inset-x-0 bottom-0 h-[2px] bg-[#76b9ed]' : 'absolute inset-x-1 bottom-0 h-[2px] bg-[#76b9ed]'} />}
        </button>
    );
}

function TaskBar() {
    return (
        <div className="flex h-10 shrink-0 bg-[#020b10] text-white">
            <button aria-label="开始" className="flex w-12 items-center justify-center bg-black">
                <svg className="h-4 w-4" viewBox="0 0 16 16" fill="#fff"><path d="M0 2l7-1v6.500H0zM8 1l8-1v7.500H8zM0 8.500h7V15l-7-1zM8 8.500h8V16l-8-1z" /></svg>
            </button>
            <div className="flex w-[344px] shrink-0 items-center bg-[#333] px-[10px]">
                <svg className="h-[21px] w-[21px]" viewBox="0 0 21 21"><circle cx="10.500" cy="10.500" r="8.500" fill="none" stroke="#fff" strokeWidth="3" /></svg>
                <input aria-label="搜索" placeholder="在这里输入你要搜索的内容" className="ml-[5px] min-w-0 flex-1 bg-transparent text-[14px] outline-none placeholder:text-[#969696]" />
                <svg className="mr-1 h-[18px] w-3" viewBox="0 0 12 18" fill="none" stroke="#aaa"><rect x="3.500" y="1.500" width="5" height="11" rx="1" /><path d="M1.500 9v5.500h9V9M6 14.500V17M4 17h4" /></svg>
            </div>
            <div className="flex gap-px pl-[2px]">
                <Task label="浏览">
                    <svg className="h-[22px] w-[22px]" viewBox="0 0 22 22" fill="#e6e6e6">
                        <path d="M10.500 10.500C4 11 0 9 0 5s5-6 8-4 3 5 2.500 9.500zM11.500 10.500C11 4 13 0 17 0s6 5 4 8-5 3-9.500 2.500zM11.500 11.500C18 11 22 13 22 17s-5 6-8 4-3-5-2.500-9.500zM10.500 11.500C11 18 9 22 5 22s-6-5-4-8 5-3 9.500-2.500z" />
                        <path d="M5 10c0-4 2-6 6-6M12 5c4 0 6 2 6 6M17 12c0 4-2 6-6 6M10 17c-4 0-6-2-6-6" fill="none" stroke="#020b10" strokeWidth=".8" />
                    </svg>
                </Task>
                <Task label="通知">
                    <svg className="-mt-1 h-7 w-8" viewBox="0 0 32 28" fill="none">
                        <path d="M22 19c-2 8-17 7-17-2 0-8 12-9 14-2 1 6-9 7-9 1 0-3 5-4 6-1M20 23c3-2 4-7 2-10" stroke="#c9c9c9" strokeWidth="1.600" />
                        <path d="M24 1c5 0 4 6 4 7l2 3H18l2-3c0-1-1-7 4-7z" fill="#e5ac17" /><circle cx="24" cy="12" r="2" fill="#c88a10" />
                    </svg>
                </Task>
                <span className="mx-[10px] h-4 w-1 self-center border-x border-[#454b4e]" />
                <Task label="Edge">
                    <svg className="h-[22px] w-[22px]" viewBox="0 0 22 22"><path d="M1 10C2 3 7 1 11 1c6 0 10 4 10 9v3H8c0 5 8 5 12 3v4c-6 3-16 2-16-6 0-4 3-6 5-7-1 1-1 2-1 3h7c0-6-10-6-14 0z" fill="#0b79d8" /></svg>
                </Task>
                <Task label="应用商店">
                    <svg className="h-6 w-[22px]" viewBox="0 0 22 24"><path d="M1 6l20 1-1 16-18-2z" fill="#fff" /><path d="M6 6c0-6 8-6 9 0" fill="none" stroke="#fff" strokeWidth="1.500" /><path d="M5 10h4v4H5zM10 10h5v4h-5zM5 15h4v4H5zM10 15h5v4h-5z" fill="#000" /></svg>
                </Task>
                <Task label="文件资源管理器">
                    <svg className="h-[22px] w-6" viewBox="0 0 24 22"><path d="M1 3h8l2 2h12v14H1z" fill="#fbd977" /><path d="M5 20v-7h14v7h-4v-3H9v3z" fill="#3ba7e4" /></svg>
                </Task>
                <Task label="浏览器" running>
                    <svg className="h-6 w-6" viewBox="0 0 24 24"><circle cx="12" cy="12" r="10" fill="#58b82c" stroke="#e7f5dd" strokeWidth="1.500" /><path d="M8 12h8c0-5-8-5-8 0 0 5 6 5 8 3" fill="none" stroke="#fff" strokeWidth="2.500" /><path d="M3 22C2 15 14 3 22 2" fill="none" stroke="#3d9a1c" strokeWidth="1.500" /></svg>
                </Task>
                <Task label="GGJ2013" active running><AppLogo className="h-6 w-6" /></Task>
                <Task label="写字板" running>
                    <svg className="h-6 w-6" viewBox="0 0 24 24"><rect x="1" y="1" width="22" height="22" rx="2" fill="#f6a915" stroke="#ffe49a" /><path d="M3 6l13-1 2 13-12 3z" fill="#fff" /><path d="M7 9l7-1M7 12l7-1M8 15l7-1" stroke="#b9863a" /><path d="M22 2l-8 13" stroke="#8a3414" strokeWidth="2.500" /></svg>
                </Task>
                <Task label="任务管理器" running>
                    <svg className="h-[22px] w-6" viewBox="0 0 24 22"><path d="M1 5h8v12H1z" fill="#a9a9a9" /><path d="M6 2l16 1v12H6z" fill="#dfe6ea" stroke="#8e979c" /><path d="M8 10h3l1-4 2 6 2-4 1 2h3" fill="none" stroke="#2f7fae" /><path d="M11 15h6l2 5H9z" fill="#b9bfc2" /></svg>
                </Task>
            </div>
            <div className="ml-auto flex items-center text-center leading-[18px]">
                <div className="w-16"><p>72%</p><p>CPU使用</p></div>
                <button aria-label="显示隐藏的图标" className="ml-[10px]"><ChevronUp size={16} strokeWidth={2} /></button>
                <svg className="ml-2 h-3 w-4" viewBox="0 0 16 12" fill="none" stroke="#fff"><path d="M4 4h10v7H5V8" strokeWidth="1.500" /><path d="M7 6h6v3H7z" fill="#fff" /><path d="M1 1v4h3V1M2.500 5v4" /></svg>
                <svg className="ml-2 h-4 w-4" viewBox="0 0 16 16" fill="none" stroke="#ddd" strokeWidth="1.300"><path d="M2 14C2 8 7 3 13 3M5 14c0-4 4-8 8-8M8 14c0-3 2-5 5-5" /><circle cx="12" cy="13" r="1.500" fill="#fff" stroke="none" /></svg>
                <Volume2 size={17} strokeWidth={2} className="ml-[6px]" />
                <span className="ml-2 text-[14px]">中</span>
                <Sogou className="ml-[14px] h-[15px] w-[15px]" />
                <div className="ml-3 w-[70px]"><p>9:31</p><p>2017/8/18</p></div>
                <button aria-label="2 条通知" className="relative ml-4 flex h-10 w-7 items-center">
                    <svg className="h-4 w-4" viewBox="0 0 16 16"><path d="M0 0h16v12H9l-3 4v-4H0z" fill="#fff" /><path d="M3 3h10M3 6h10M3 9h7" stroke="#000" /></svg>
                    <span className="absolute right-1 bottom-[6px] h-4 w-4 rounded-full border border-[#888] bg-[#333] text-[11px] leading-[14px] font-bold">2</span>
                </button>
                <span className="ml-2 h-full w-[5px] border-l border-[#555]" />
            </div>
        </div>
    );
}

export default function App() {
    return (
        <div className="relative flex h-screen flex-col overflow-hidden bg-[#f0f0f0] font-['Noto_Sans','Noto_Sans_CJK_SC',sans-serif] text-xs text-black">
            <TitleBar />
            <MenuBar />
            <MainToolbar />
            <main className="relative flex min-h-0 flex-1">
                <NavPanel />
                <div className="ml-[6px] flex min-w-0 flex-1 flex-col">
                    <MemberToolbar />
                    <div className="flex min-h-0 flex-1 pr-1">
                        <MemberPanel />
                        <PropertyPanel />
                    </div>
                </div>
                <SectionDialog />
                <Marks />
            </main>
            <StatusBar />
            <TaskBar />
            <ImeBar />
            <div className="absolute -top-7 left-[950px] flex h-[46px] w-[46px] items-end justify-center rounded-full border-2 border-[#d8d8d8] bg-[#35c25e] pb-[3px] text-[11px] font-bold text-white shadow-md">73</div>
        </div>
    );
}
